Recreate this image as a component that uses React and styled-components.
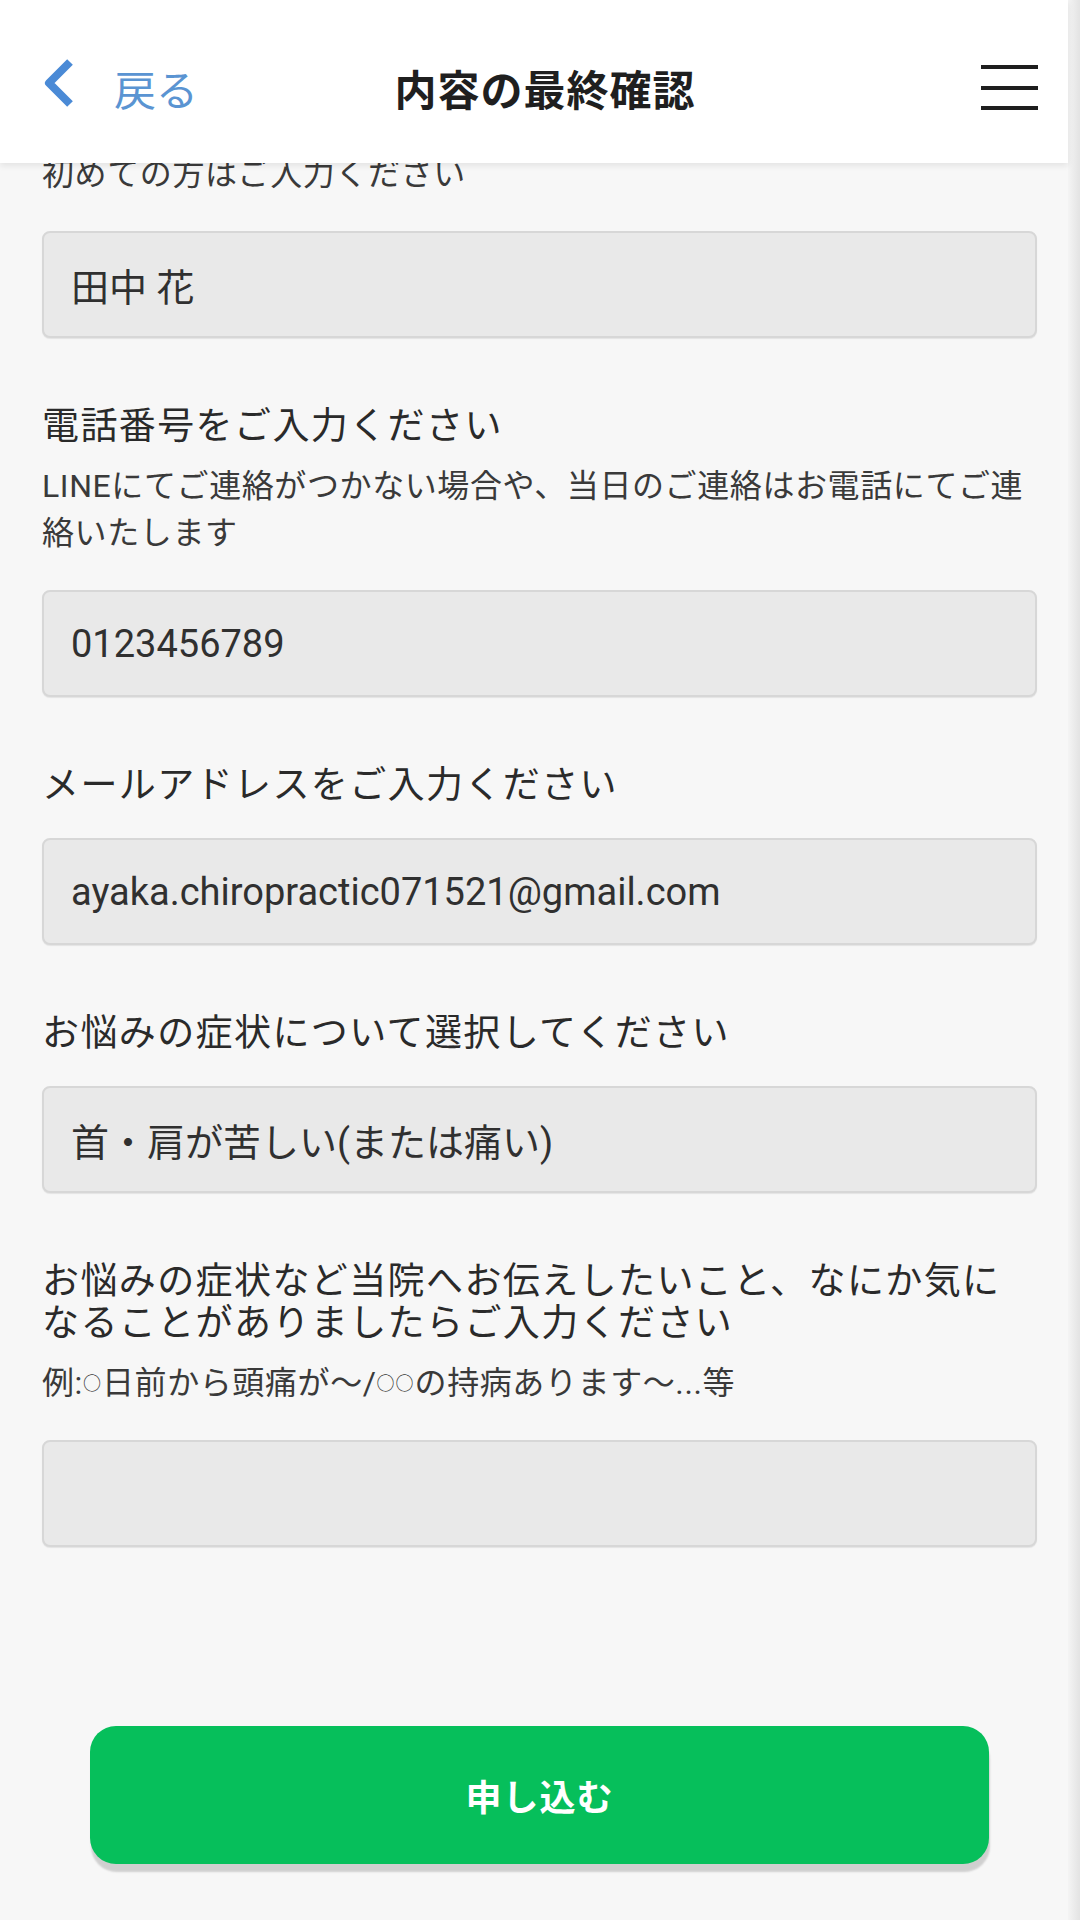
import React from 'react';
import styled, { createGlobalStyle } from 'styled-components';

const GlobalStyle = createGlobalStyle`
  html, body {
    margin: 0;
    padding: 0;
    background: #f7f7f7;
  }
  body {
    font-family: Roboto, "Noto Sans CJK JP", sans-serif;
    color: #2b2b2b;
  }
  * {
    box-sizing: border-box;
  }
`

const Root = styled.div`
  display: flex;
  width: 1080px;
  height: 1920px;
  overflow: hidden;
  background: #f7f7f7;
`
const Screen = styled.div`
  flex: 1;
  min-width: 0;
  display: flex;
  flex-direction: column;
`
const Edge = styled.div`
  width: 12px;
  background: linear-gradient(to right, #f4f4f4, #e3e3e3);
`
const Header = styled.header`
  position: relative;
  z-index: 2;
  flex-shrink: 0;
  height: 163px;
  display: grid;
  grid-template-columns: 1fr auto 1fr;
  align-items: center;
  padding: 12px 30px 0 40px;
  background: #fff;
  box-shadow: 0 3px 6px rgba(0, 0, 0, 0.08);
`
const Back = styled.a`
  display: flex;
  align-items: center;
  gap: 38px;
  color: #5a94d2;
  font-size: 42px;
  text-decoration: none;
  svg {
    margin-top: -9px;
  }
`
const Title = styled.h1`
  margin: 0;
  padding-left: 12px;
  font-size: 42px;
  font-weight: 700;
  color: #1f1f1f;
  letter-spacing: 1px;
`
const Menu = styled.div`
  justify-self: end;
  width: 57px;
  display: flex;
  flex-direction: column;
  gap: 16.5px;
`
const Bar = styled.span`
  display: block;
  height: 4px;
  background: #1e1e1e;
`
const Form = styled.main`
  display: flex;
  flex-direction: column;
  margin-top: -12px;
  padding: 0 31px 0 42px;
`
const Group = styled.section`
  display: flex;
  flex-direction: column;
  margin-top: 68px;
`
const Label = styled.div`
  font-size: 37px;
  line-height: 42px;
  letter-spacing: 1.4px;
  color: #2a2a2a;
`
const Note = styled.div`
  margin-top: ${p => (p.$first ? 0 : 15)}px;
  font-size: 32px;
  line-height: 47px;
  letter-spacing: 0.6px;
  color: #3a3a3a;
`
// the small placeholder circles in the example text
const Ring = styled.span`
  font-size: 18px;
  vertical-align: 4px;
  letter-spacing: 1px;
`
const Input = styled.div`
  height: 107px;
  margin-top: 31px;
  display: flex;
  align-items: center;
  padding: 0 27px;
  background: #e9e9e9;
  border: 2px solid #d7d7d7;
  border-radius: 8px;
  box-shadow: 0 1px 1px rgba(0, 0, 0, 0.08);
  font-size: 38px;
  color: #303030;
  ${Note} + & {
    margin-top: 33px;
  }
`
const Submit = styled.button`
  margin: 179px 48px 0;
  height: 138px;
  border: none;
  border-radius: 26px;
  background: #06bf5b;
  color: #fff;
  font-family: Roboto, "Noto Sans CJK JP", sans-serif;
  font-size: 36px;
  font-weight: 700;
  letter-spacing: 1px;
  box-shadow: 1px 8px 2px rgba(0, 0, 0, 0.16);
`

const fields = [
  {
    label: '電話番号をご入力ください',
    note: 'LINEにてご連絡がつかない場合や、当日のご連絡はお電話にてご連絡いたします',
    value: '0123456789',
  },
  { label: 'メールアドレスをご入力ください', value: 'ayaka.chiropractic071521@gmail.com' },
  { label: 'お悩みの症状について選択してください', value: '首・肩が苦しい(または痛い)' },
  {
    label: 'お悩みの症状など当院へお伝えしたいこと、なにか気になることがありましたらご入力ください',
    note: (
      <>
        例:<Ring>○</Ring>日前から頭痛が〜/<Ring>○○</Ring>の持病あります〜...等
      </>
    ),
    value: '',
  },
]

function Chevron() {
  return (
    <svg width="36" height="50" viewBox="0 0 36 50">
      <polyline
        points="30,4 9,25 30,46"
        fill="none"
        stroke="#4a8ad6"
        strokeWidth="8"
        strokeLinejoin="round"
      />
    </svg>
  )
}

export default function App() {
  return (
    <Root>
      <GlobalStyle />
      <Screen>
        <Header>
          <Back href="#">
            <Chevron />
            戻る
          </Back>
          <Title>内容の最終確認</Title>
          <Menu>
            <Bar />
            <Bar />
            <Bar />
          </Menu>
        </Header>
        <Form>
          <Note $first>初めての方はご入力ください</Note>
          <Input>田中 花</Input>
          {fields.map(f => (
            <Group key={f.label}>
              <Label>{f.label}</Label>
              {f.note && <Note>{f.note}</Note>}
              <Input>{f.value}</Input>
            </Group>
          ))}
          <Submit>申し込む</Submit>
        </Form>
      </Screen>
      <Edge />
    </Root>
  )
}
